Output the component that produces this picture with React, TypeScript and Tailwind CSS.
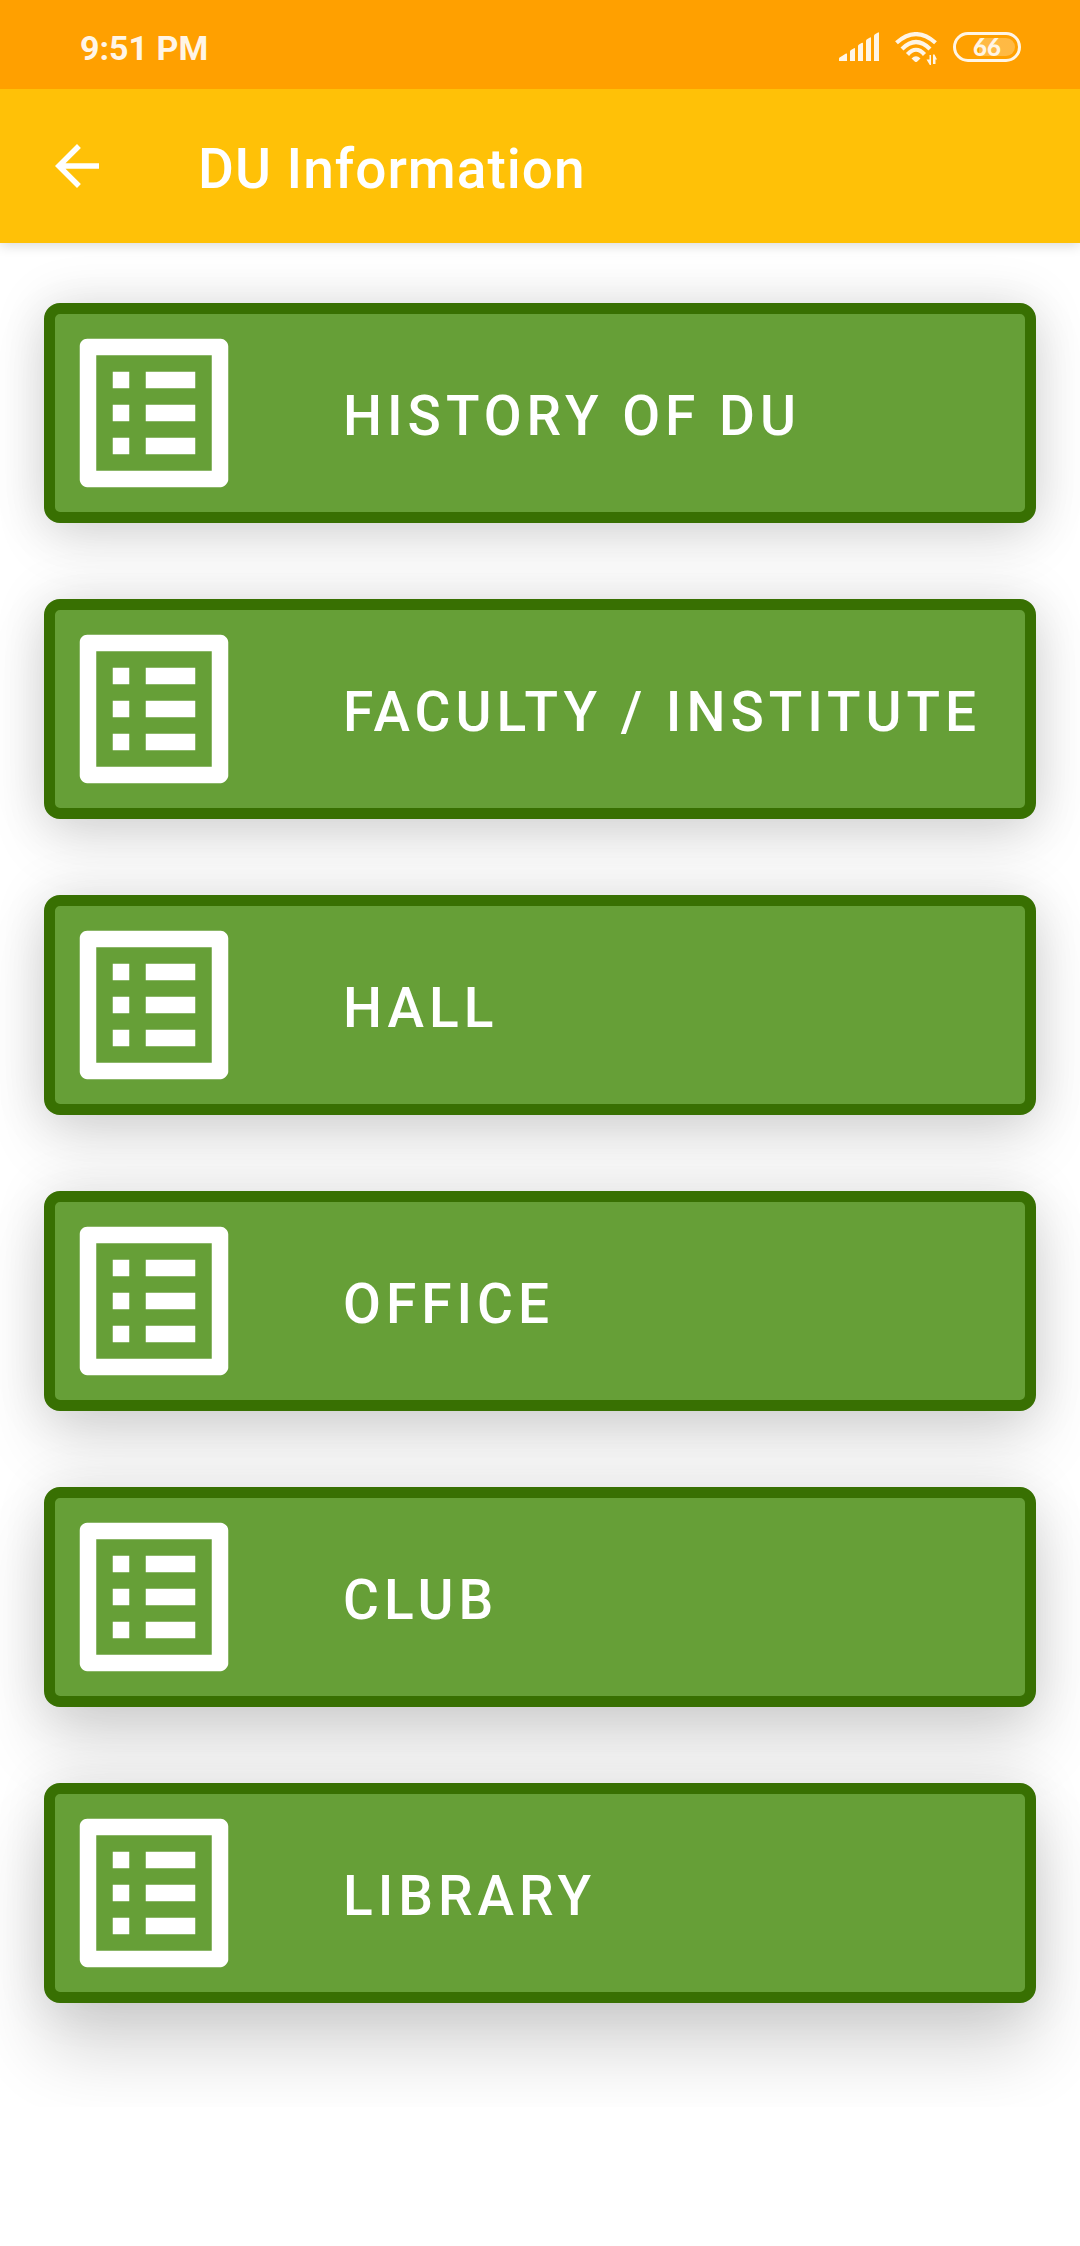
const items = ["HISTORY OF DU", "FACULTY / INSTITUTE", "HALL", "OFFICE", "CLUB", "LIBRARY"];

// Shadows deepen towards the bottom of the screen.
const shadows = [
  "shadow-[0_0_52px_rgba(0,0,0,0.13),0_20px_56px_rgba(0,0,0,0.09)]",
  "shadow-[0_0_52px_rgba(0,0,0,0.13),0_24px_58px_rgba(0,0,0,0.10)]",
  "shadow-[0_0_52px_rgba(0,0,0,0.13),0_28px_62px_rgba(0,0,0,0.11)]",
  "shadow-[0_0_52px_rgba(0,0,0,0.12),0_34px_66px_rgba(0,0,0,0.12)]",
  "shadow-[0_0_52px_rgba(0,0,0,0.11),0_40px_68px_rgba(0,0,0,0.14)]",
  "shadow-[0_0_52px_rgba(0,0,0,0.11),0_48px_72px_rgba(0,0,0,0.16)]",
];

function ListIcon() {
  return (
    <svg viewBox="0 0 24 24" className="size-[198px] shrink-0" fill="#fff" aria-hidden="true">
      <path d="M19 5v14H5V5h14m1.1-2H3.9c-.5 0-.9.4-.9.9v16.2c0 .4.4.9.9.9h16.2c.4 0 .9-.5.9-.9V3.9c0-.5-.5-.9-.9-.9zM11 7h6v2h-6V7zm0 4h6v2h-6v-2zm0 4h6v2h-6v-2zM7 7h2v2H7V7zm0 4h2v2H7v-2zm0 4h2v2H7v-2z" />
    </svg>
  );
}

function SignalIcon() {
  return (
    <svg viewBox="0 0 40 29" className="h-[29px] w-10" fill="#fff" aria-hidden="true">
      <path d="M0 29V26.500Q0 25.800 1 25.200L7 21.600Q8 21.200 8 22V29zM11 29V19.500Q11 18.600 12 18L15 16.200Q16 15.800 16 16.800V29zM19 29V14Q19 13 20 12.400L23 10.800Q24 10.400 24 11.400V29zM27 29V9Q27 8 28 7.200L31 5.400Q32 5 32 6V29zM35 29V4Q35 3 36 2.200L39 .4Q40 0 40 1V29z" />
    </svg>
  );
}

function WifiIcon() {
  return (
    <svg viewBox="0 0 44 34" className="ml-4 h-[34px] w-11" fill="none" stroke="#fff" strokeWidth="4.200" aria-hidden="true">
      <path d="M1.500 10.800Q21 -6.500 40.500 10.800M7 17Q21 3 35 17M12.500 22.500Q21 13 29.500 22.500" />
      <path d="M16.500 26.500Q21 22 25.500 26.500L22 29.700Q21 30.500 20 29.700z" fill="#fff" stroke="none" />
      <path d="M31.500 27.500H34.500V23H36V33H34.800zM38 22.500H39.500L42 27.500H40.500V32H38z" fill="#fff" stroke="none" />
    </svg>
  );
}

export default function App() {
  return (
    <div className="min-h-screen bg-white font-[Roboto,sans-serif] text-white">
      <div className="relative z-20 flex h-[89px] items-center bg-[#ffa000] pt-2 pr-[59px] pl-20">
        <span className="grow pb-0.5 text-[34px] leading-10 font-bold opacity-90">9:51 PM</span>
        <div className="flex items-start opacity-90">
          <SignalIcon />
          <WifiIcon />
          <div className="ml-3.5 flex h-[30px] w-[68px] items-center justify-center rounded-full border-[3px] border-white p-[3px]">
            <span className="flex h-[18px] w-full items-center justify-center rounded-full bg-linear-to-r from-transparent from-35% to-white/30 to-35% font-[Lato,sans-serif] text-2xl leading-none font-black">66</span>
          </div>
        </div>
      </div>
      <header className="relative z-10 flex h-[154px] items-center bg-[#ffc107] pl-11 shadow-[0_2px_12px_rgba(0,0,0,0.16)]">
        <button type="button" aria-label="Back">
          <svg viewBox="0 0 24 24" className="size-[66px]" fill="#fff" aria-hidden="true">
            <path d="M20 11H7.830l5.590-5.590L12 4l-8 8 8 8 1.410-1.410L7.830 13H20v-2z" />
          </svg>
        </button>
        <h1 className="pt-1.5 pl-[88px] text-[55px] leading-16 font-medium tracking-[1px]">DU Information</h1>
      </header>
      <main className="flex flex-col gap-[76px] overflow-hidden px-11 pt-[60px] pb-[104px]">
        {items.map((label, i) => (
          <button
            key={label}
            type="button"
            className={`flex items-center rounded-2xl border-11 border-[#387002] bg-[#669f37] text-left ${shadows[i]}`}
          >
            <ListIcon />
            <span className="pt-1.5 pl-[90px] text-[55px] leading-16 font-medium tracking-[5px]">{label}</span>
          </button>
        ))}
      </main>
    </div>
  );
}
